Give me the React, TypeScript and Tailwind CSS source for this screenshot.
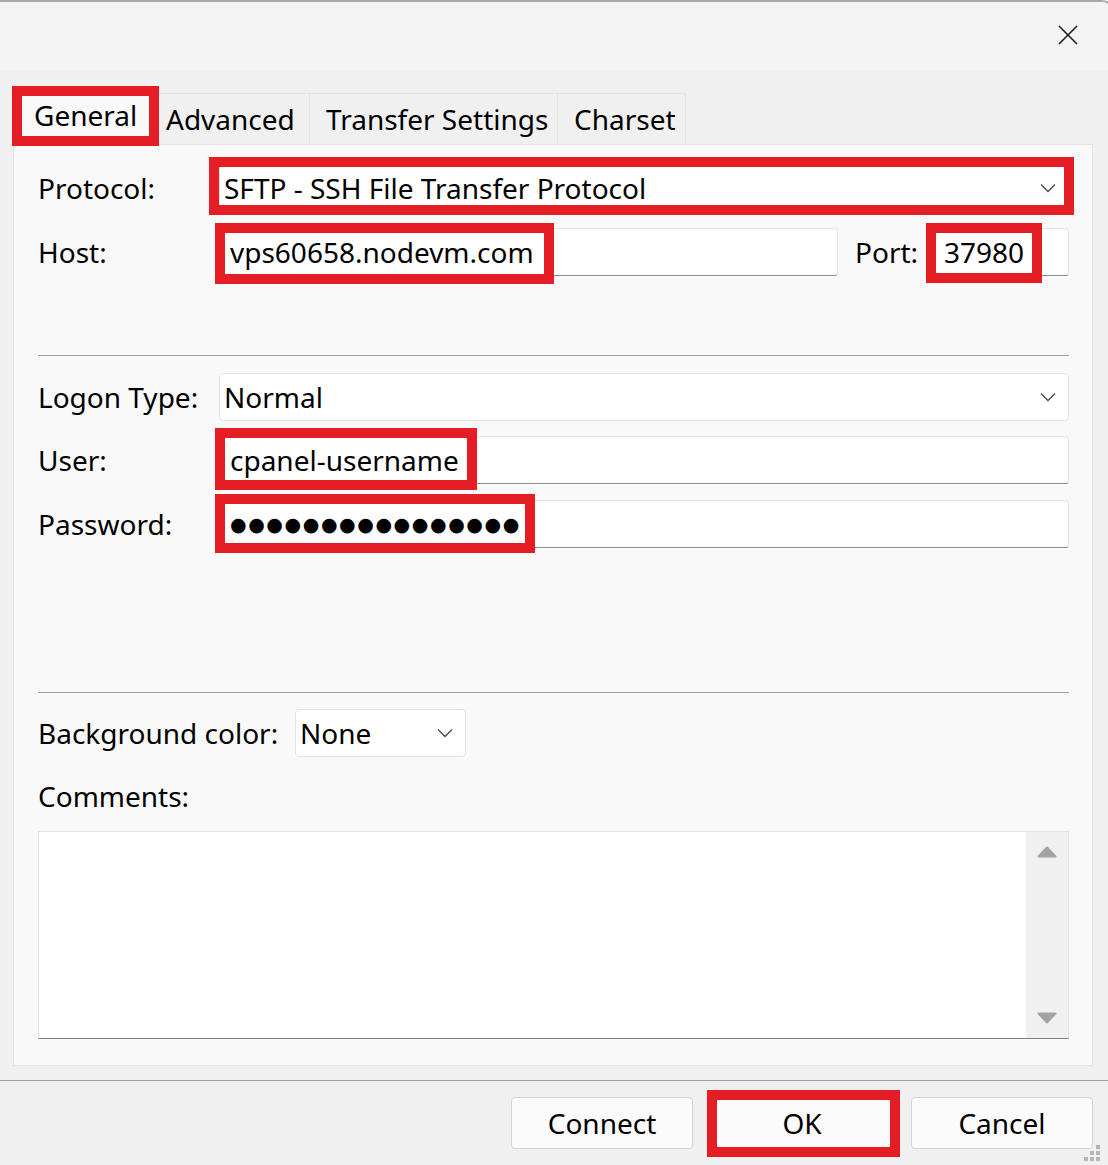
import React from 'react';
import clsx from 'clsx';

// red highlight frame laid over a control
const Mark = ({ className }: { className: string }) => (
  <div className={clsx('absolute border-[10px] border-[#e41e24] pointer-events-none z-20', className)} />
);

const Chevron = () => (
  <svg width="16" height="10" viewBox="0 0 16 10" className="shrink-0">
    <polyline points="1,1.5 8,8.5 15,1.5" fill="none" stroke="#4a4a4a" strokeWidth="1.3" />
  </svg>
);

const Select = ({ value, className }: { value: string; className?: string }) => (
  <div
    className={clsx(
      'h-[48px] bg-white border border-[#e3e3e3] rounded-[4px] flex items-center justify-between pl-[4px] pr-[12px]',
      className
    )}
  >
    <span className="leading-none">{value}</span>
    <Chevron />
  </div>
);

const TextBox = ({ children, className }: { children?: React.ReactNode; className?: string }) => (
  <div
    className={clsx(
      'h-[48px] bg-white border border-[#e6e6e6] border-b-[#8c8c8c] rounded-[3px] flex items-center pl-[10px]',
      className
    )}
  >
    {children}
  </div>
);

const Label = ({ children, className }: { children: React.ReactNode; className?: string }) => (
  <div className={clsx('shrink-0 leading-none', className)}>{children}</div>
);

const Button = ({ children }: { children: React.ReactNode }) => (
  <div className="w-[182px] h-[52px] bg-[#fbfbfb] border border-[#d4d4d4] rounded-[4px] flex items-center justify-center">
    {children}
  </div>
);

export default function App() {
  return (
    <div className="w-[1108px] h-[1165px] overflow-hidden bg-white">
      <div className="w-[1114px] h-[1167px] bg-[#f0f0f0] border-t-2 border-r-2 border-[#a8a8a8] rounded-tr-[12px] overflow-hidden relative font-['Noto_Sans',sans-serif] text-[28px] text-black">
        {/* title bar */}
        <div className="h-[69px] bg-[#f3f3f3] flex items-center justify-end pr-[33px] pb-[3px]">
          <svg width="22" height="22" viewBox="0 0 22 22">
            <path d="M2 2 L20 20 M20 2 L2 20" stroke="#1b1b1b" strokeWidth="1.6" />
          </svg>
        </div>

        {/* tabs */}
        <div className="pl-[13px] pt-[17px] flex items-end relative z-10">
          <div className="relative w-[145px] h-[57px] bg-[#f9f9f9] border border-b-0 border-[#e3e3e3] flex items-center pl-[20px] pb-[4px]">
            <span className="leading-none">General</span>
            <Mark className="left-[-2px] top-[-3px] w-[147px] h-[60px]" />
          </div>
          <div className="w-[152px] h-[51px] border-t border-r border-[#e3e3e3] flex items-center pl-[8px] mb-px">
            <span className="leading-none">Advanced</span>
          </div>
          <div className="w-[248px] h-[51px] border-t border-r border-[#e3e3e3] flex items-center pl-[16px] mb-px">
            <span className="leading-none">Transfer Settings</span>
          </div>
          <div className="w-[128px] h-[51px] border-t border-r border-[#e3e3e3] flex items-center pl-[16px] mb-px">
            <span className="leading-none">Charset</span>
          </div>
        </div>

        {/* tab page */}
        <div className="ml-[13px] -mt-px w-[1080px] h-[922px] bg-[#f9f9f9] border border-[#e3e3e3] pl-[24px] pr-[23px] pt-[19px] flex flex-col">
          <div className="flex items-center">
            <Label className="w-[181px]">Protocol:</Label>
            <div className="relative flex-1">
              <Select value="SFTP - SSH File Transfer Protocol" />
              <Mark className="left-[-10px] top-[-7px] w-[865px] h-[58px]" />
            </div>
          </div>

          <div className="flex items-center mt-[16px]">
            <Label className="w-[181px]">Host:</Label>
            <div className="relative w-[619px]">
              <TextBox className="pl-[10px]">
                <span className="leading-none">vps60658.nodevm.com</span>
              </TextBox>
              <Mark className="left-[-4px] top-[-5px] w-[339px] h-[61px]" />
            </div>
            <Label className="ml-[17px] w-[75px]">Port:</Label>
            <div className="relative flex-1">
              <TextBox className="pl-[13px]">
                <span className="leading-none">37980</span>
              </TextBox>
              <Mark className="left-[-4px] top-[-5px] w-[116px] h-[60px]" />
            </div>
          </div>

          <div className="mt-[79px] h-px bg-[#a0a0a0]" />

          <div className="flex items-center mt-[17px]">
            <Label className="w-[181px]">Logon Type:</Label>
            <Select value="Normal" className="flex-1" />
          </div>

          <div className="flex items-center mt-[15px]">
            <Label className="w-[181px]">User:</Label>
            <div className="relative flex-1">
              <TextBox>
                <span className="leading-none">cpanel-username</span>
              </TextBox>
              <Mark className="left-[-4px] top-[-8px] w-[262px] h-[62px]" />
            </div>
          </div>

          <div className="flex items-center mt-[16px]">
            <Label className="w-[181px]">Password:</Label>
            <div className="relative flex-1">
              <TextBox className="pl-[8px]">
                <span className="leading-none font-['DejaVu_Sans',sans-serif] text-[19px] tracking-[1.6px]">
                  ●●●●●●●●●●●●●●●●
                </span>
              </TextBox>
              <Mark className="left-[-4px] top-[-6px] w-[320px] h-[59px]" />
            </div>
          </div>

          <div className="mt-[144px] h-px bg-[#a0a0a0]" />

          <div className="flex items-center mt-[16px]">
            <Label className="w-[257px]">Background color:</Label>
            <Select value="None" className="w-[171px]" />
          </div>

          <div className="h-[40px] mt-[19px] flex items-center">
            <Label>Comments:</Label>
          </div>

          <div className="mt-[15px] h-[208px] bg-white border border-[#e3e3e3] border-b-[#7c7c7c] flex justify-end">
            <div className="w-[42px] bg-[#f0f0f0] flex flex-col items-center justify-between py-[14px]">
              <svg width="20" height="12" viewBox="0 0 20 12">
                <path d="M10 1.5 L18.5 10.5 L1.5 10.5 Z" fill="#a3a3a3" stroke="#a3a3a3" strokeWidth="2" strokeLinejoin="round" />
              </svg>
              <svg width="20" height="12" viewBox="0 0 20 12">
                <path d="M10 10.5 L18.5 1.5 L1.5 1.5 Z" fill="#a3a3a3" stroke="#a3a3a3" strokeWidth="2" strokeLinejoin="round" />
              </svg>
            </div>
          </div>
        </div>

        {/* button bar */}
        <div className="mt-[14px] w-[1108px] border-t border-[#a0a0a0] pt-[16px] pr-[15px] flex justify-end gap-[18px]">
          <Button>Connect</Button>
          <div className="relative">
            <Button>OK</Button>
            <Mark className="left-[-4px] top-[-7px] w-[193px] h-[67px]" />
          </div>
          <Button>Cancel</Button>
        </div>

        {/* size grip */}
        <div className="absolute left-[1084px] top-[1143px] grid grid-cols-3 gap-[2px]">
          <span className="w-[4px] h-[4px]" />
          <span className="w-[4px] h-[4px]" />
          <span className="w-[4px] h-[4px] bg-[#b4b4b4]" />
          <span className="w-[4px] h-[4px]" />
          <span className="w-[4px] h-[4px] bg-[#b4b4b4]" />
          <span className="w-[4px] h-[4px] bg-[#b4b4b4]" />
          <span className="w-[4px] h-[4px] bg-[#b4b4b4]" />
          <span className="w-[4px] h-[4px] bg-[#b4b4b4]" />
          <span className="w-[4px] h-[4px] bg-[#b4b4b4]" />
        </div>
      </div>
    </div>
  );
}
